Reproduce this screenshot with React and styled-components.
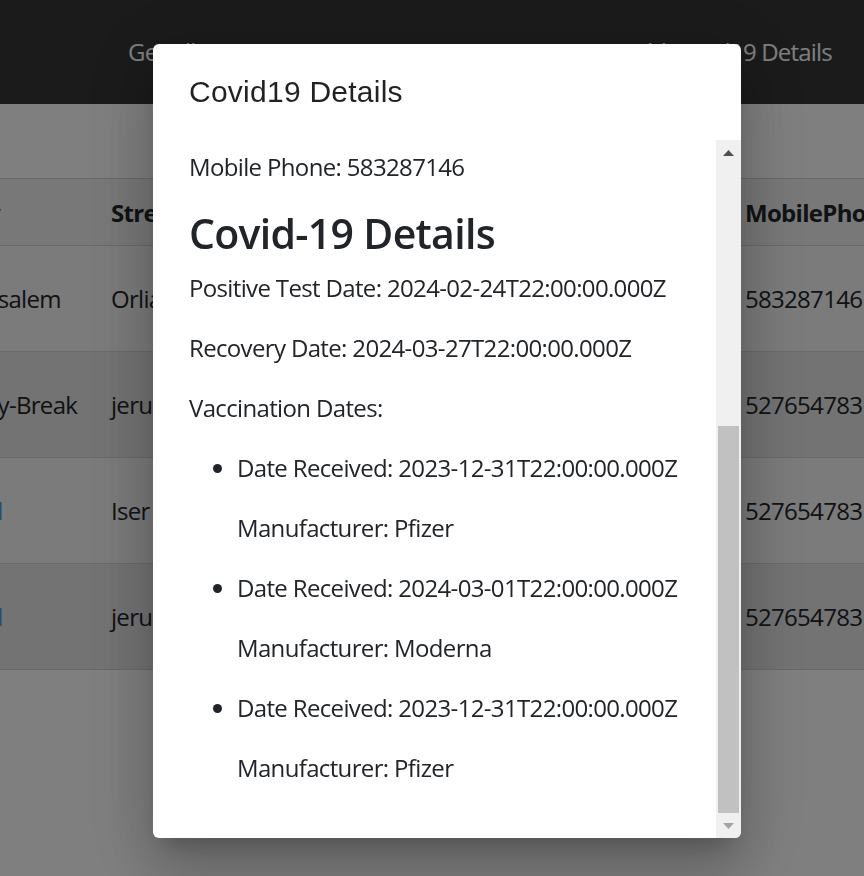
import { useLayoutEffect, useRef, useState } from 'react';
import styled, { createGlobalStyle } from 'styled-components';

const GlobalStyle = createGlobalStyle`
  html, body {
    margin: 0;
    padding: 0;
  }
  body {
    background: #fff;
    font-family: "Open Sans", "Noto Sans", sans-serif;
    color: #212529;
    overflow: hidden;
  }
`;

const Navbar = styled.nav`
  height: 104px;
  box-sizing: border-box;
  background: #363636;
  display: flex;
  align-items: center;
  justify-content: space-between;
  padding: 0 32px 2px 128px;
`;

const NavLink = styled.a`
  font-size: 24px;
  color: #fff;
  text-decoration: none;
  letter-spacing: -0.8px;
`;

const Main = styled.main`
  padding-top: 74px;
`;

const TableViewport = styled.div`
  overflow: hidden;
  width: 100%;
`;

const Table = styled.table`
  width: ${(p) => p.$width}px;
  border-collapse: collapse;
  table-layout: fixed;
  border-top: 1px solid #d2d2d2;
  font-size: 24px;
  letter-spacing: -0.7px;
`;

const Row = styled.tr`
  height: ${(p) => (p.$head ? 67 : 106)}px;
  background: ${(p) => (p.$head ? '#f0f0f0' : p.$even ? '#e6e6e6' : '#f6f6f6')};
`;

const HeadCell = styled.th`
  padding: 0 12px;
  text-align: left;
  font-weight: 700;
  white-space: nowrap;
  overflow: hidden;
  border-bottom: 1px solid #d2d2d2;
`;

const Cell = styled.td`
  padding: 0 12px;
  white-space: nowrap;
  overflow: hidden;
  border-bottom: 1px solid #d2d2d2;
`;

const CellLink = styled.a`
  color: #5b9bd8;
  text-decoration: none;
  letter-spacing: 0;
`;

const Backdrop = styled.div`
  position: fixed;
  inset: 0;
  background: rgba(0, 0, 0, 0.5);
  display: flex;
  align-items: flex-start;
  padding: 44px 0 0 153px;
`;

const Paper = styled.div`
  width: 588px;
  height: 794px;
  background: #fff;
  border-radius: 6px;
  overflow: hidden;
  display: flex;
  flex-direction: column;
  box-shadow: 0 16px 22px -10px rgba(0, 0, 0, 0.2),
    0 36px 57px 4px rgba(0, 0, 0, 0.14), 0 14px 69px 12px rgba(0, 0, 0, 0.12);
`;

const DialogTitle = styled.h2`
  margin: 0;
  padding: 24px 36px;
  font-family: "Liberation Sans", Arial, sans-serif;
  font-size: 30px;
  font-weight: 400;
  line-height: 48px;
  letter-spacing: 0.25px;
  color: rgba(0, 0, 0, 0.87);
`;

const ScrollArea = styled.div`
  flex: 1;
  min-height: 0;
  display: flex;
`;

const Content = styled.div`
  flex: 1;
  overflow: hidden;
  padding: 0 20px 28px 36px;
  letter-spacing: -0.65px;
`;

const Text = styled.p`
  margin: 0 0 24px;
  font-size: 24px;
  line-height: 36px;
`;

const Heading = styled.h2`
  margin: 0 0 12px;
  font-size: 41px;
  font-weight: 600;
  line-height: 1.2;
  letter-spacing: -0.7px;
`;

const List = styled.ul`
  margin: 0 0 24px;
  padding-left: 48px;
  font-size: 24px;
`;

const Scrollbar = styled.div`
  width: 25px;
  background: #f0f0f0;
  display: flex;
  flex-direction: column;
`;

const ScrollButton = styled.div`
  height: 25px;
  flex: none;
  display: flex;
  align-items: center;
  justify-content: center;
  color: ${(p) => (p.$disabled ? '#a3a3a3' : '#505050')};
`;

const Track = styled.div`
  flex: 1;
  display: flex;
  flex-direction: column;
  justify-content: flex-end;
  padding: 0 2px;
`;

const Thumb = styled.div`
  background: #c1c1c1;
`;

const columns = [
  { key: 'id', label: 'ID', width: 140 },
  { key: 'firstName', label: 'FirstName', width: 160 },
  { key: 'lastName', label: 'LastName', width: 160 },
  { key: 'city', label: 'City', width: 155 },
  { key: 'street', label: 'Street', width: 190 },
  { key: 'houseNumber', label: 'HouseNumber', width: 150 },
  { key: 'birthDate', label: 'DateOfBirth', width: 160 },
  { key: 'phone', label: 'Phone', width: 134 },
  { key: 'mobilePhone', label: 'MobilePhone', width: 200 },
];

const tableWidth = columns.reduce((sum, c) => sum + c.width, 0);

const patients = [
  { id: '325486597', firstName: 'Avi', lastName: 'Cohen', city: 'Jerusalem', street: 'Orlian', houseNumber: '12', birthDate: '1990-05-14', phone: '026543210', mobilePhone: '583287146' },
  { id: '214365879', firstName: 'Sara', lastName: 'Levi', city: 'Bney-Break', street: 'jerusalem', houseNumber: '7', birthDate: '1985-11-02', phone: '036789012', mobilePhone: '527654783' },
  { id: '318273645', firstName: 'Moshe', lastName: 'Katz', city: 'Elad', cityLink: true, street: 'Iser Yehuda', houseNumber: '3', birthDate: '1978-02-20', phone: '089876543', mobilePhone: '527654783' },
  { id: '207654321', firstName: 'Rivka', lastName: 'Mizrahi', city: 'Elad', cityLink: true, street: 'jerusalem', houseNumber: '21', birthDate: '2001-08-09', phone: '089876543', mobilePhone: '527654783' },
];

const vaccinations = [
  { date: '2023-12-31T22:00:00.000Z', manufacturer: 'Pfizer' },
  { date: '2024-03-01T22:00:00.000Z', manufacturer: 'Moderna' },
  { date: '2023-12-31T22:00:00.000Z', manufacturer: 'Pfizer' },
];

const Arrow = ({ down }) => (
  <svg width="11" height="6" viewBox="0 0 11 6">
    <polygon points={down ? '0,0 11,0 5.5,6' : '0,6 5.5,0 11,6'} fill="currentColor" />
  </svg>
);

const PatientsTable = () => {
  const viewport = useRef(null);

  useLayoutEffect(() => {
    // the page is scrolled sideways to the City column
    viewport.current.scrollLeft = 516;
  }, []);

  return (
    <TableViewport ref={viewport}>
      <Table $width={tableWidth}>
        <colgroup>
          {columns.map((c) => (
            <col key={c.key} style={{ width: c.width }} />
          ))}
        </colgroup>
        <thead>
          <Row $head>
            {columns.map((c) => (
              <HeadCell key={c.key}>{c.label}</HeadCell>
            ))}
          </Row>
        </thead>
        <tbody>
          {patients.map((p, i) => (
            <Row key={p.id} $even={i % 2 === 1}>
              {columns.map((c) => (
                <Cell key={c.key}>
                  {c.key === 'city' && p.cityLink ? <CellLink href="#">{p.city}</CellLink> : p[c.key]}
                </Cell>
              ))}
            </Row>
          ))}
        </tbody>
      </Table>
    </TableViewport>
  );
};

const DetailsDialog = () => {
  const content = useRef(null);
  const track = useRef(null);
  const [thumb, setThumb] = useState(0);

  useLayoutEffect(() => {
    const el = content.current;
    el.scrollTop = el.scrollHeight;
    setThumb((track.current.clientHeight * el.clientHeight) / el.scrollHeight);
  }, []);

  return (
    <Backdrop>
      <Paper>
        <DialogTitle>Covid19 Details</DialogTitle>
        <ScrollArea>
          <Content ref={content}>
            <Heading>Patient Details</Heading>
            <Text>ID: 325486597</Text>
            <Text>First Name: Avi</Text>
            <Text>Last Name: Cohen</Text>
            <Text>City: Jerusalem</Text>
            <Text>Street: Orlian 12</Text>
            <Text>Date of Birth: 1990-05-14</Text>
            <Text>Phone: 026543210</Text>
            <Text>Mobile Phone: 583287146</Text>
            <Heading>Covid-19 Details</Heading>
            <Text>Positive Test Date: 2024-02-24T22:00:00.000Z</Text>
            <Text>Recovery Date: 2024-03-27T22:00:00.000Z</Text>
            <Text>Vaccination Dates:</Text>
            <List>
              {vaccinations.map((v, i) => (
                <li key={i}>
                  <Text>Date Received: {v.date}</Text>
                  <Text>Manufacturer: {v.manufacturer}</Text>
                </li>
              ))}
            </List>
          </Content>
          <Scrollbar>
            <ScrollButton>
              <Arrow />
            </ScrollButton>
            <Track ref={track}>
              <Thumb style={{ height: thumb }} />
            </Track>
            <ScrollButton $disabled>
              <Arrow down />
            </ScrollButton>
          </Scrollbar>
        </ScrollArea>
      </Paper>
    </Backdrop>
  );
};

const App = () => (
  <>
    <GlobalStyle />
    <Navbar>
      <NavLink href="#">Get All Patients</NavLink>
      <NavLink href="#">Add Covid19 Details</NavLink>
    </Navbar>
    <Main>
      <PatientsTable />
    </Main>
    <DetailsDialog />
  </>
);

export default App;
